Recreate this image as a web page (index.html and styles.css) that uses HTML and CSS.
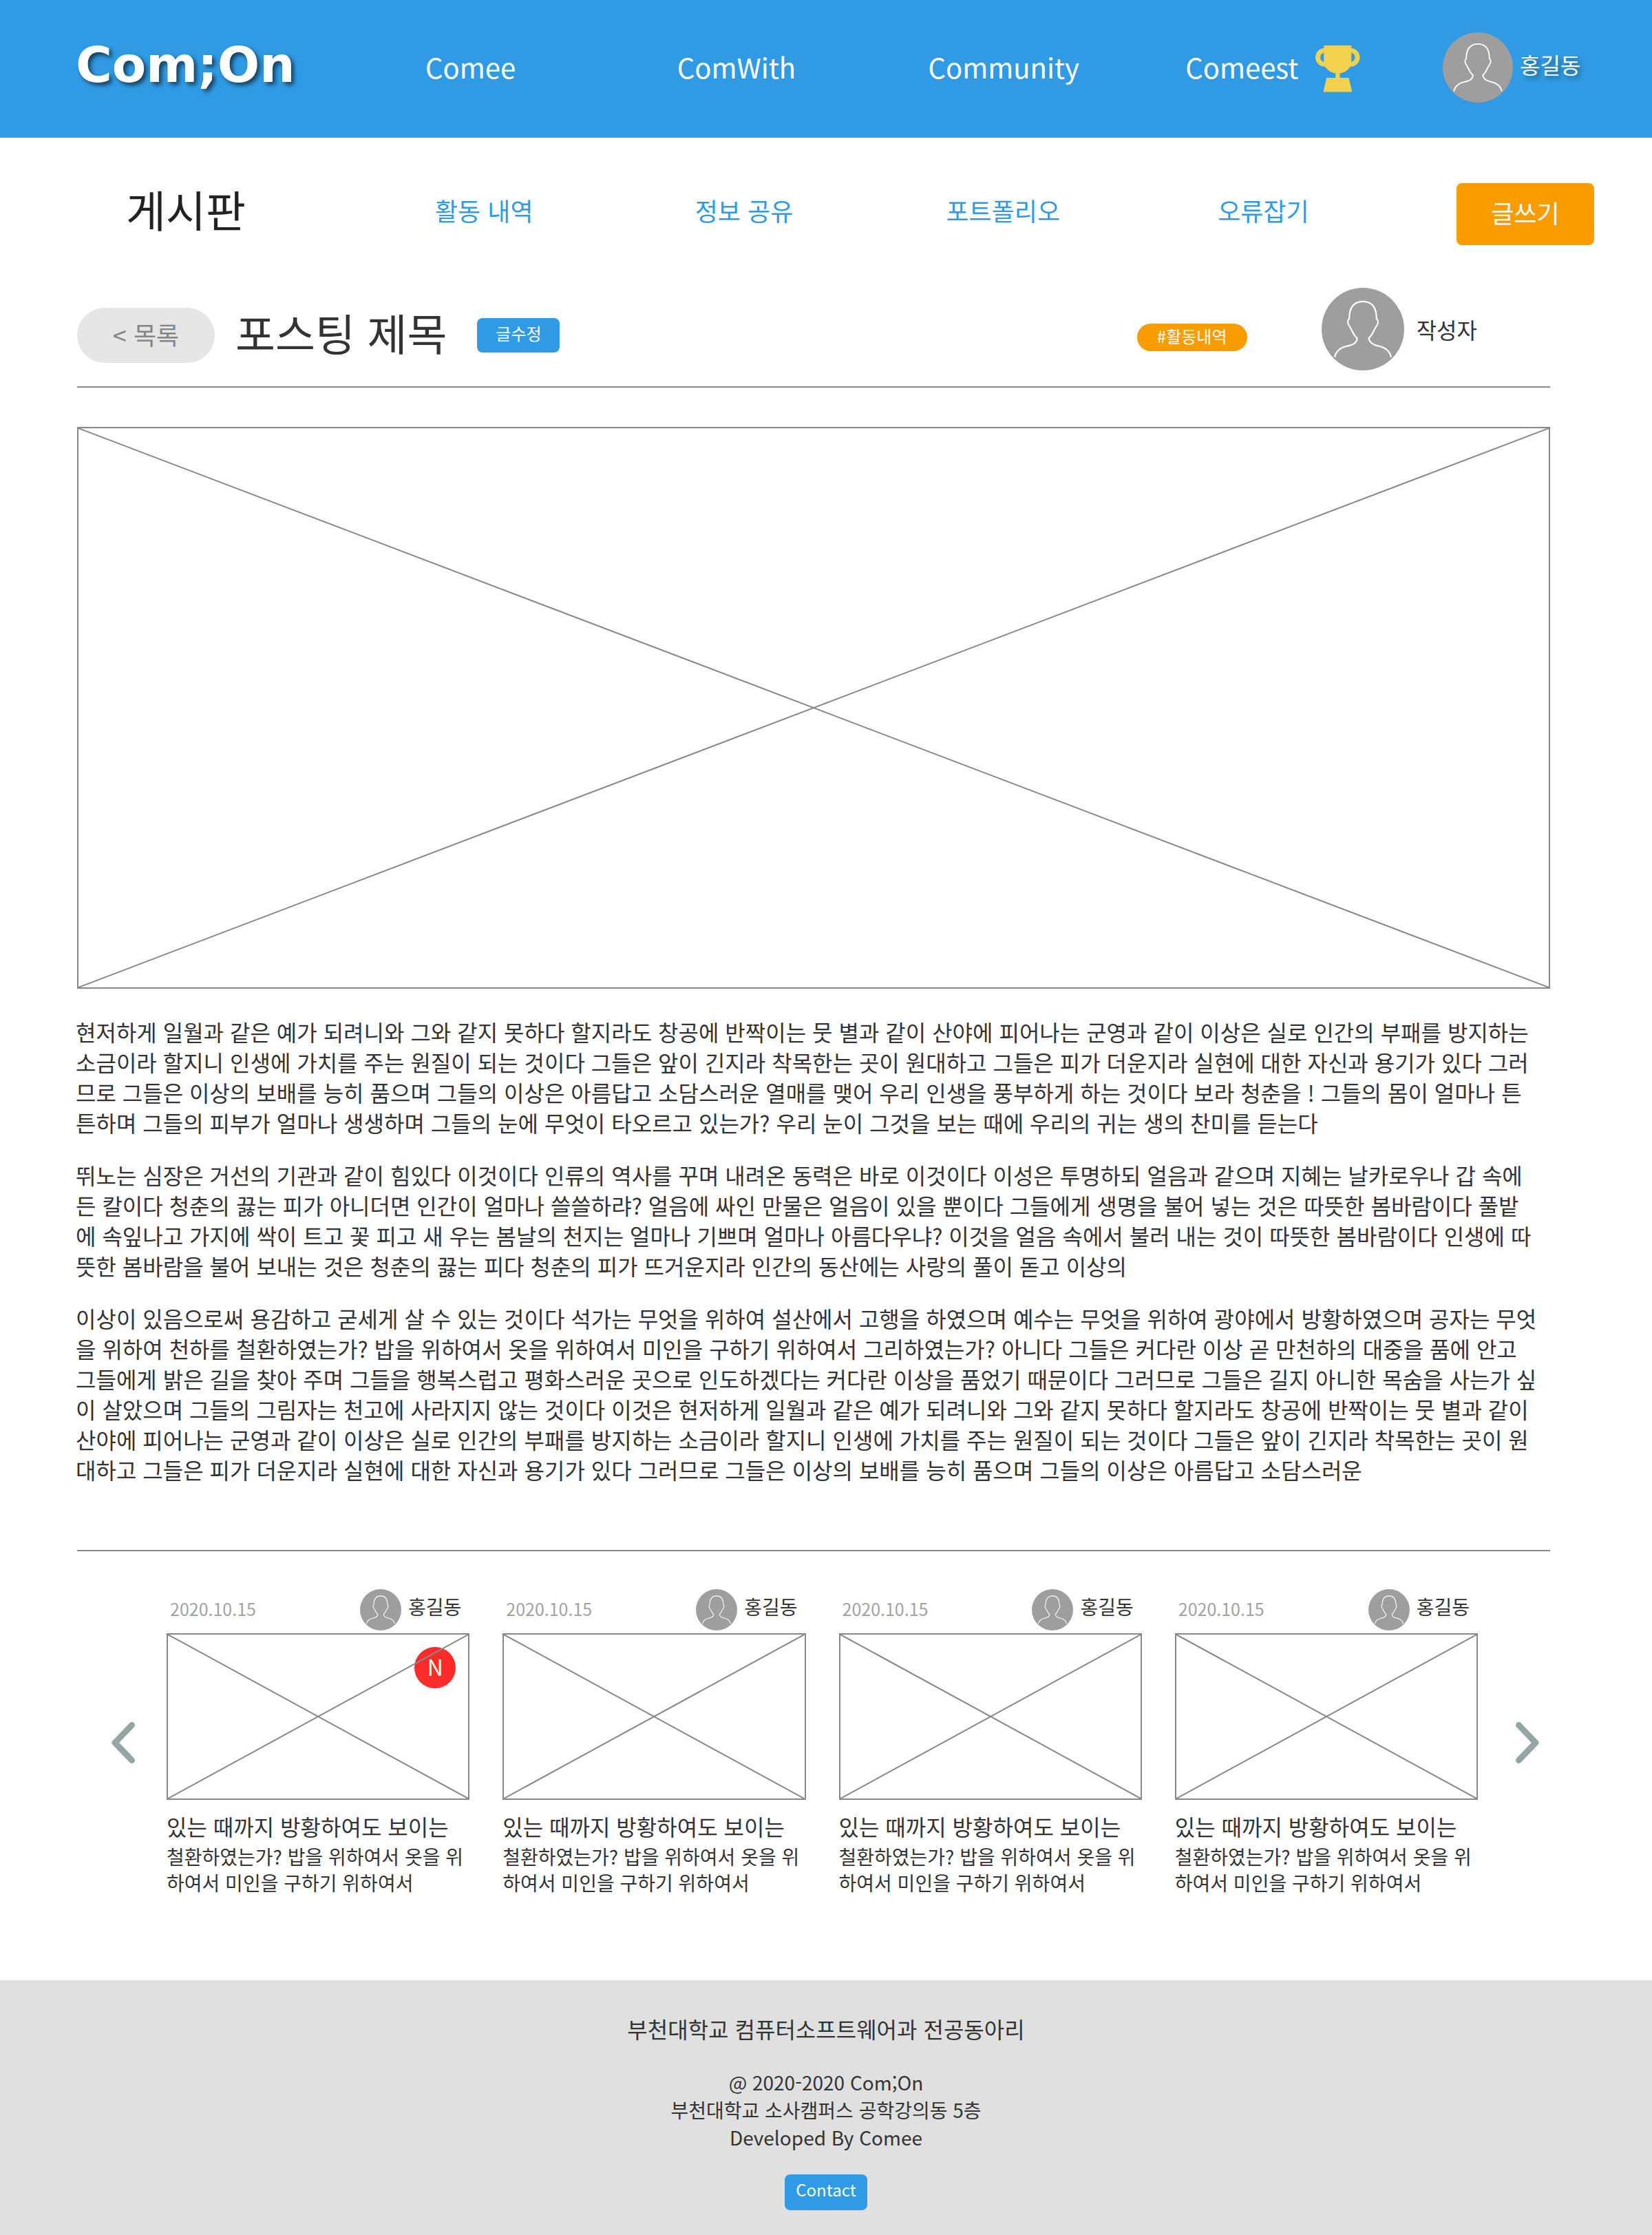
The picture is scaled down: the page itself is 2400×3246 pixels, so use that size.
FILE: index.html
```html
<!DOCTYPE html>
<html lang="ko">
<head>
<meta charset="utf-8">
<meta name="viewport" content="width=device-width, initial-scale=1">
<title>Com;On 게시판</title>
<link rel="stylesheet" href="styles.css">
</head>
<body>
<svg class="sprite" aria-hidden="true">
  <symbol id="avatar" viewBox="0 0 100 100">
    <circle cx="50" cy="50" r="50" fill="#9e9e9e"/>
    <path d="M16 84C17 77 23 72 31 70.500C39 69 43 66 43 61C38 57 37 51 34 47C31 43 31 39 33.500 37.500C33.500 24 39 16.500 50 16.500C61 16.500 66.500 24 66.500 37.500C69 39 69 43 66 47C63 51 62 57 57 61C58 66 61 69 69 70.500C77 72 83 77 84 84" fill="none" stroke="#fff" stroke-width="1.800"/>
  </symbol>
  <symbol id="cross" viewBox="0 0 100 100" preserveAspectRatio="none">
    <path d="M0 0L100 100M100 0L0 100" fill="none" stroke="#888" stroke-width="2" vector-effect="non-scaling-stroke"/>
  </symbol>
</svg>

<header class="site-header">
  <a class="logo" href="#">Com;On</a>
  <nav class="main-nav" aria-label="주 메뉴">
    <a href="#">Comee</a>
    <a href="#">ComWith</a>
    <a href="#">Community</a>
    <a class="with-icon" href="#">Comeest
      <svg class="trophy" viewBox="0 0 67 68" aria-hidden="true">
        <g fill="#f2d14f">
          <path d="M13.300 0H53.300V24C53.300 34 43 40 36.500 40.500V47H49.500L54.300 67.500H12.500L17.200 47H30.300V40.500C24 40 13.300 34 13.300 24Z"/>
          <path d="M13.300 4A13.400 13.400 0 0 0 13.300 30.700H18V24H13.300A7 7 0 0 1 13.300 10.500H15V4ZM53.300 4A13.400 13.400 0 0 1 53.300 30.700H49V24H53.300A7 7 0 0 0 53.300 10.500H52V4Z"/>
        </g>
      </svg>
    </a>
  </nav>
  <a class="user" href="#">
    <svg class="user-avatar" aria-hidden="true"><use href="#avatar"/></svg>
    <span class="user-name">홍길동</span>
  </a>
</header>

<div class="board-bar">
  <h1 class="board-title">게시판</h1>
  <nav class="board-nav" aria-label="게시판 메뉴">
    <a href="#">활동 내역</a>
    <a href="#">정보 공유</a>
    <a href="#">포트폴리오</a>
    <a href="#">오류잡기</a>
  </nav>
  <button class="write" type="button">글쓰기</button>
</div>

<main>
  <article>
    <header class="post-header">
      <div class="post-heading">
        <a class="back" href="#">&lt; 목록</a>
        <h2 class="post-title">포스팅 제목</h2>
        <button class="small-button" type="button">글수정</button>
      </div>
      <div class="post-meta">
        <a class="tag" href="#">#활동내역</a>
        <svg class="author-avatar" aria-hidden="true"><use href="#avatar"/></svg>
        <span class="author">작성자</span>
      </div>
    </header>
    <hr>
    <div class="placeholder hero"><svg aria-hidden="true"><use href="#cross"/></svg></div>
    <div class="post-body">
      <p>현저하게 일월과 같은 예가 되려니와 그와 같지 못하다 할지라도 창공에 반짝이는 뭇 별과 같이 산야에 피어나는 군영과 같이 이상은 실로 인간의 부패를 방지하는 소금이라 할지니 인생에 가치를 주는 원질이 되는 것이다 그들은 앞이 긴지라 착목한는 곳이 원대하고 그들은 피가 더운지라 실현에 대한 자신과 용기가 있다 그러므로 그들은 이상의 보배를 능히 품으며 그들의 이상은 아름답고 소담스러운 열매를 맺어 우리 인생을 풍부하게 하는 것이다 보라 청춘을 ! 그들의 몸이 얼마나 튼튼하며 그들의 피부가 얼마나 생생하며 그들의 눈에 무엇이 타오르고 있는가? 우리 눈이 그것을 보는 때에 우리의 귀는 생의 찬미를 듣는다</p>
      <p>뛰노는 심장은 거선의 기관과 같이 힘있다 이것이다 인류의 역사를 꾸며 내려온 동력은 바로 이것이다 이성은 투명하되 얼음과 같으며 지혜는 날카로우나 갑 속에 든 칼이다 청춘의 끓는 피가 아니더면 인간이 얼마나 쓸쓸하랴? 얼음에 싸인 만물은 얼음이 있을 뿐이다 그들에게 생명을 불어 넣는 것은 따뜻한 봄바람이다 풀밭에 속잎나고 가지에 싹이 트고 꽃 피고 새 우는 봄날의 천지는 얼마나 기쁘며 얼마나 아름다우냐? 이것을 얼음 속에서 불러 내는 것이 따뜻한 봄바람이다 인생에 따뜻한 봄바람을 불어 보내는 것은 청춘의 끓는 피다 청춘의 피가 뜨거운지라 인간의 동산에는 사랑의 풀이 돋고 이상의</p>
      <p>이상이 있음으로써 용감하고 굳세게 살 수 있는 것이다 석가는 무엇을 위하여 설산에서 고행을 하였으며 예수는 무엇을 위하여 광야에서 방황하였으며 공자는 무엇을 위하여 천하를 철환하였는가? 밥을 위하여서 옷을 위하여서 미인을 구하기 위하여서 그리하였는가? 아니다 그들은 커다란 이상 곧 만천하의 대중을 품에 안고 그들에게 밝은 길을 찾아 주며 그들을 행복스럽고 평화스러운 곳으로 인도하겠다는 커다란 이상을 품었기 때문이다 그러므로 그들은 길지 아니한 목숨을 사는가 싶이 살았으며 그들의 그림자는 천고에 사라지지 않는 것이다 이것은 현저하게 일월과 같은 예가 되려니와 그와 같지 못하다 할지라도 창공에 반짝이는 뭇 별과 같이 산야에 피어나는 군영과 같이 이상은 실로 인간의 부패를 방지하는 소금이라 할지니 인생에 가치를 주는 원질이 되는 것이다 그들은 앞이 긴지라 착목한는 곳이 원대하고 그들은 피가 더운지라 실현에 대한 자신과 용기가 있다 그러므로 그들은 이상의 보배를 능히 품으며 그들의 이상은 아름답고 소담스러운</p>
    </div>
  </article>
  <hr>
  <section class="carousel" aria-label="다른 글">
    <button class="arrow" type="button" aria-label="이전">
      <svg viewBox="0 0 34 60" aria-hidden="true"><path d="M29.500 4.500L5 30L29.500 55.500"/></svg>
    </button>
    <div class="cards">
      <article class="card">
        <div class="card-head">
          <time datetime="2020-10-15">2020.10.15</time>
          <svg class="card-avatar" aria-hidden="true"><use href="#avatar"/></svg>
          <span class="card-author">홍길동</span>
        </div>
        <div class="placeholder thumb"><span class="badge">N</span><svg aria-hidden="true"><use href="#cross"/></svg></div>
        <h3>있는 때까지 방황하여도 보이는</h3>
        <p>철환하였는가? 밥을 위하여서 옷을 위하여서 미인을 구하기 위하여서</p>
      </article>
      <article class="card">
        <div class="card-head">
          <time datetime="2020-10-15">2020.10.15</time>
          <svg class="card-avatar" aria-hidden="true"><use href="#avatar"/></svg>
          <span class="card-author">홍길동</span>
        </div>
        <div class="placeholder thumb"><svg aria-hidden="true"><use href="#cross"/></svg></div>
        <h3>있는 때까지 방황하여도 보이는</h3>
        <p>철환하였는가? 밥을 위하여서 옷을 위하여서 미인을 구하기 위하여서</p>
      </article>
      <article class="card">
        <div class="card-head">
          <time datetime="2020-10-15">2020.10.15</time>
          <svg class="card-avatar" aria-hidden="true"><use href="#avatar"/></svg>
          <span class="card-author">홍길동</span>
        </div>
        <div class="placeholder thumb"><svg aria-hidden="true"><use href="#cross"/></svg></div>
        <h3>있는 때까지 방황하여도 보이는</h3>
        <p>철환하였는가? 밥을 위하여서 옷을 위하여서 미인을 구하기 위하여서</p>
      </article>
      <article class="card">
        <div class="card-head">
          <time datetime="2020-10-15">2020.10.15</time>
          <svg class="card-avatar" aria-hidden="true"><use href="#avatar"/></svg>
          <span class="card-author">홍길동</span>
        </div>
        <div class="placeholder thumb"><svg aria-hidden="true"><use href="#cross"/></svg></div>
        <h3>있는 때까지 방황하여도 보이는</h3>
        <p>철환하였는가? 밥을 위하여서 옷을 위하여서 미인을 구하기 위하여서</p>
      </article>
    </div>
    <button class="arrow" type="button" aria-label="다음">
      <svg viewBox="0 0 34 60" aria-hidden="true"><path d="M4.500 4.500L29 30L4.500 55.500"/></svg>
    </button>
  </section>
</main>

<footer class="site-footer">
  <p class="club">부천대학교 컴퓨터소프트웨어과 전공동아리</p>
  <p>@ 2020-2020 Com;On</p>
  <p>부천대학교 소사캠퍼스 공학강의동 5층</p>
  <p>Developed By Comee</p>
  <button class="small-button contact" type="button">Contact</button>
</footer>
</body>
</html>
```
FILE: styles.css
```css
* {
  box-sizing: border-box;
}

body {
  margin: 0;
  background: #fff;
  color: #333;
  font-family: "Noto Sans CJK KR", sans-serif;
  font-size: 32px;
  line-height: 44px;
}

h1, h2, h3, p {
  margin: 0;
  font-weight: 400;
}

a {
  color: inherit;
  text-decoration: none;
}

button {
  padding: 0;
  border: 0;
  color: #fff;
  font-family: inherit;
  cursor: pointer;
}

hr {
  margin: 0 0 0 2px;
  border: 0;
  border-top: 2px solid #888;
}

.sprite {
  position: absolute;
  width: 0;
  height: 0;
}

/* Top bar */
.site-header {
  display: grid;
  grid-template-columns: 507fr 1479fr 304fr;
  align-items: center;
  height: 200px;
  padding-left: 110px;
  background: #309be4;
  color: #fff;
}

.logo {
  padding-bottom: 12px;
  font-family: "DejaVu Sans", sans-serif;
  font-size: 72px;
  font-weight: 700;
  line-height: 84px;
  text-shadow: 4px 4px 6px rgba(0, 0, 0, 0.6);
}

.main-nav {
  display: grid;
  grid-template-columns: 366fr 365fr 374fr 374fr;
  align-items: center;
  padding-left: 1px;
  font-size: 40px;
  line-height: 60px;
}

.main-nav a {
  padding-bottom: 6px;
}

.with-icon {
  display: flex;
  align-items: center;
  gap: 24px;
}

.trophy {
  width: 67px;
  height: 68px;
  margin-top: 6px;
}

.user {
  display: flex;
  align-items: center;
  gap: 10px;
  padding-bottom: 4px;
}

.user-avatar {
  width: 102px;
  height: 102px;
}

.user-name {
  padding-bottom: 10px;
  text-shadow: 4px 4px 6px rgba(0, 0, 0, 0.4);
}

/* Board navigation */
.board-bar {
  display: grid;
  grid-template-columns: 448fr 1485fr 200fr;
  align-items: center;
  padding: 66px 84px 0 183px;
}

.board-title {
  padding-bottom: 16px;
  color: #222;
  font-size: 63px;
  line-height: 74px;
}

.board-nav {
  display: grid;
  grid-template-columns: 378fr 365fr 395fr 347fr;
  padding: 0 0 12px 1px;
  color: #309be4;
  font-size: 36px;
}

.write {
  height: 90px;
  padding-bottom: 6px;
  border-radius: 8px;
  background: #f99c00;
  font-size: 36px;
}

/* Post */
main {
  padding: 62px 148px 123px 110px;
}

.post-header {
  display: flex;
  justify-content: space-between;
  margin-bottom: 23px;
  padding: 0 106px 0 2px;
}

.post-heading,
.post-meta {
  display: flex;
  align-items: center;
}

.post-heading {
  padding-top: 18px;
}

.back {
  width: 200px;
  margin-right: 30px;
  padding: 16px 0 20px;
  border-radius: 40px;
  background: #e6e6e6;
  color: #858585;
  font-size: 36px;
  text-align: center;
}

.post-title {
  margin-right: 44px;
  padding-bottom: 10px;
  font-size: 63px;
  line-height: 74px;
}

.small-button {
  width: 120px;
  height: 50px;
  padding-bottom: 6px;
  border-radius: 8px;
  background: #309be4;
  font-size: 24px;
  line-height: 36px;
}

.tag {
  width: 160px;
  margin: 24px 108px 0 0;
  padding-bottom: 4px;
  border-radius: 20px;
  background: #f99c00;
  color: #fff;
  font-size: 24px;
  line-height: 36px;
  text-align: center;
}

.author-avatar {
  width: 120px;
  height: 120px;
  margin-right: 18px;
}

.placeholder {
  position: relative;
  border: 2px solid #888;
}

.placeholder svg {
  position: relative;
  display: block;
  width: 100%;
  height: 100%;
}

.hero {
  aspect-ratio: 2140 / 816;
  margin: 57px 0 40px 2px;
}

.post-body {
  display: grid;
  gap: 32px;
  margin-bottom: 95px;
  padding-right: 18px;
}

/* Related posts */
.carousel {
  display: flex;
  align-items: center;
  margin-top: 55px;
  padding: 0 16px 0 52px;
}

.arrow {
  flex: none;
  width: 34px;
  height: 60px;
  background: none;
}

.arrow svg {
  display: block;
  fill: none;
  stroke: #95a5a6;
  stroke-width: 9;
  stroke-linecap: round;
  stroke-linejoin: round;
}

.cards {
  display: grid;
  flex: 1;
  grid-template-columns: repeat(4, 1fr);
  gap: 48px;
  margin: 0 55px 0 46px;
}

.card-head {
  display: flex;
  align-items: center;
  margin-bottom: 4px;
  padding: 0 12px 0 5px;
}

.card time {
  flex: 1;
  padding-bottom: 4px;
  color: #a3a3a3;
  font-size: 25px;
}

.card-avatar {
  width: 60px;
  height: 60px;
  margin-right: 10px;
}

.card-author {
  padding-bottom: 10px;
  font-size: 28px;
}

.thumb {
  aspect-ratio: 440 / 242;
  margin-bottom: 16px;
}

.badge {
  position: absolute;
  top: 18px;
  right: 18px;
  width: 60px;
  height: 60px;
  border-radius: 50%;
  background: #ff2b2b;
  color: #fff;
  line-height: 56px;
  text-align: center;
}

.card h3 {
  margin-bottom: 3px;
  font-size: 32px;
}

.card p {
  font-size: 28px;
  line-height: 38px;
}

/* Footer */
.site-footer {
  padding: 48px 24px 36px;
  background: #e0e0e0;
  font-size: 28px;
  line-height: 40px;
  text-align: center;
}

.site-footer .club {
  margin-bottom: 36px;
  font-size: 32px;
  line-height: 44px;
}

.contact {
  display: block;
  height: 52px;
  margin: 34px auto 0;
  padding-bottom: 8px;
}
```
